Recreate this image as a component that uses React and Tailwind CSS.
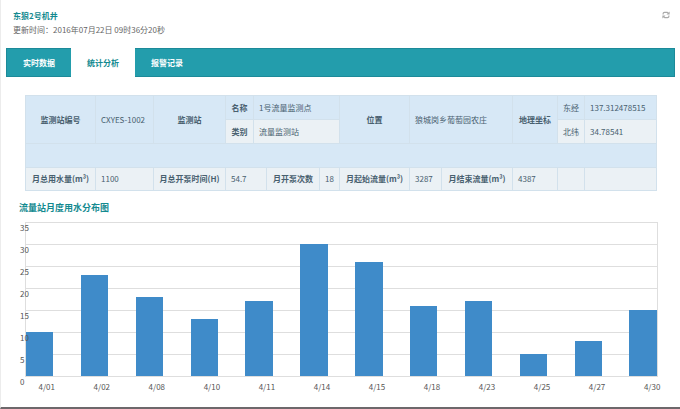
import React, { useState } from "react";

const tabs = ["实时数据", "统计分析", "报警记录"];

const columns = [70, 58, 72, 28, 13, 53, 20, 70, 32, 71, 45, 27, 72];

const usage = [
  { date: "4/01", value: 10 },
  { date: "4/02", value: 23 },
  { date: "4/08", value: 18 },
  { date: "4/10", value: 13 },
  { date: "4/11", value: 17 },
  { date: "4/14", value: 30 },
  { date: "4/15", value: 26 },
  { date: "4/18", value: 16 },
  { date: "4/23", value: 17 },
  { date: "4/25", value: 5 },
  { date: "4/27", value: 8 },
  { date: "4/30", value: 15 },
];

const MAX = 35;
const ticks = [35, 30, 25, 20, 15, 10, 5];

const RefreshIcon = () => (
  <svg viewBox="0 0 16 16" className="w-2 h-2" fill="none" stroke="currentColor" strokeWidth="2.4">
    <path d="M2.2 7V5.5Q2.2 2.8 5 2.8H10.5L13 5" />
    <path d="M15.2 1v6.2H9z" fill="currentColor" stroke="none" />
    <path d="M13.8 9v1.5Q13.8 13.2 11 13.2H5.5L3 11" />
    <path d="M0.8 15V8.8H7z" fill="currentColor" stroke="none" />
  </svg>
);

const Th = ({ children, ...props }) => (
  <th className="border border-[#d2e1ec] p-0 text-center font-bold" {...props}>
    {children}
  </th>
);

const Td = ({ children, ...props }) => (
  <td className="border border-[#d2e1ec] py-0 pr-0 pl-[5px]" {...props}>
    {children}
  </td>
);

const StationTable = () => (
  <table className="w-full table-fixed border-collapse whitespace-nowrap bg-[#d7e8f6] text-[#48606f]">
    <colgroup>
      {columns.map((width, i) => (
        <col key={i} style={{ width }} />
      ))}
    </colgroup>
    <tbody>
      <tr className="h-6">
        <Th rowSpan={2}>监测站编号</Th>
        <Td rowSpan={2}>CXYES-1002</Td>
        <Th rowSpan={2}>监测站</Th>
        <Th>名称</Th>
        <Td colSpan={3}>1号流量监测点</Td>
        <Th rowSpan={2}>位置</Th>
        <Td colSpan={2} rowSpan={2}>狼城岗乡葡萄园农庄</Td>
        <Th rowSpan={2}>地理坐标</Th>
        <Td>东经</Td>
        <Td>137.312478515</Td>
      </tr>
      <tr className="h-6 [&>*]:bg-[#ebf1f5]">
        <Th>类别</Th>
        <Td colSpan={3}>流量监测站</Td>
        <Td>北纬</Td>
        <Td>34.78541</Td>
      </tr>
      <tr className="h-6">
        <Td colSpan={13} />
      </tr>
      <tr className="h-[23px] bg-[#ebf1f5]">
        <Th>月总用水量(m³)</Th>
        <Td>1100</Td>
        <Th>月总开泵时间(H)</Th>
        <Td colSpan={2}>54.7</Td>
        <Th>月开泵次数</Th>
        <Td>18</Td>
        <Th>月起始流量(m³)</Th>
        <Td>3287</Td>
        <Th>月结束流量(m³)</Th>
        <Td>4387</Td>
        <Td />
        <Td />
      </tr>
    </tbody>
  </table>
);

const UsageChart = () => (
  <div className="text-[#555]">
    <div className="relative border-x border-b border-[#dedede]">
      {/* Grid lines */}
      {ticks.map((tick) => (
        <div key={tick} className="h-[22px] border-t border-[#dedede]" />
      ))}

      {/* Bars */}
      <div className="absolute inset-0 flex items-end justify-between">
        {usage.map(({ date, value }) => (
          <div
            key={date}
            className="w-[4.35%] bg-[#3f8bc9]"
            style={{ height: `${(value / MAX) * 100}%` }}
          />
        ))}
      </div>

      {/* Value axis */}
      <div className="absolute top-0 -left-1.5">
        {[...ticks, 0].map((tick) => (
          <div key={tick} className="h-[22px] leading-3">
            {tick}
          </div>
        ))}
      </div>
    </div>

    {/* Date axis */}
    <div className="-mr-2 ml-2 mt-1 flex justify-between leading-3">
      {usage.map(({ date }) => (
        <span key={date} className="w-[4.35%] text-center">
          {date}
        </span>
      ))}
    </div>
  </div>
);

const App = () => {
  const [active, setActive] = useState(1);

  return (
    <div className="min-h-screen border-b-2 border-l border-b-[#6d686b] border-l-[#ececec] bg-white font-['Noto_Sans_CJK_SC',sans-serif] text-[8px] leading-3">
      <header className="flex items-start justify-between pt-2.5 pr-[10px] pl-3">
        <div>
          <h1 className="font-bold text-[#148a90]">东狼2号机井</h1>
          <p className="mt-0.5 text-[#666]">更新时间：2016年07月22日 09时36分20秒</p>
        </div>
        <button type="button" aria-label="刷新" className="mt-px text-[#aaa]">
          <RefreshIcon />
        </button>
      </header>

      <nav className="mt-3 mr-[5px] ml-[5px] flex h-[29px] border border-[#1c8a99] bg-[#239dac]">
        {tabs.map((tab, i) => (
          <button
            key={tab}
            type="button"
            onClick={() => setActive(i)}
            className={`w-16 font-bold ${
              i === active ? "-my-px bg-white text-[#148a90]" : "text-white"
            }`}
          >
            {tab}
          </button>
        ))}
      </nav>

      <main className="pt-[18px] pr-6 pl-6">
        <StationTable />
        <h2 className="mt-[9px] -ml-1.5 text-[9px] leading-4 font-bold text-[#148a90]">
          流量站月度用水分布图
        </h2>
        <div className="mt-1.5 -mr-0.5">
          <UsageChart />
        </div>
      </main>
    </div>
  );
};

export default App;
